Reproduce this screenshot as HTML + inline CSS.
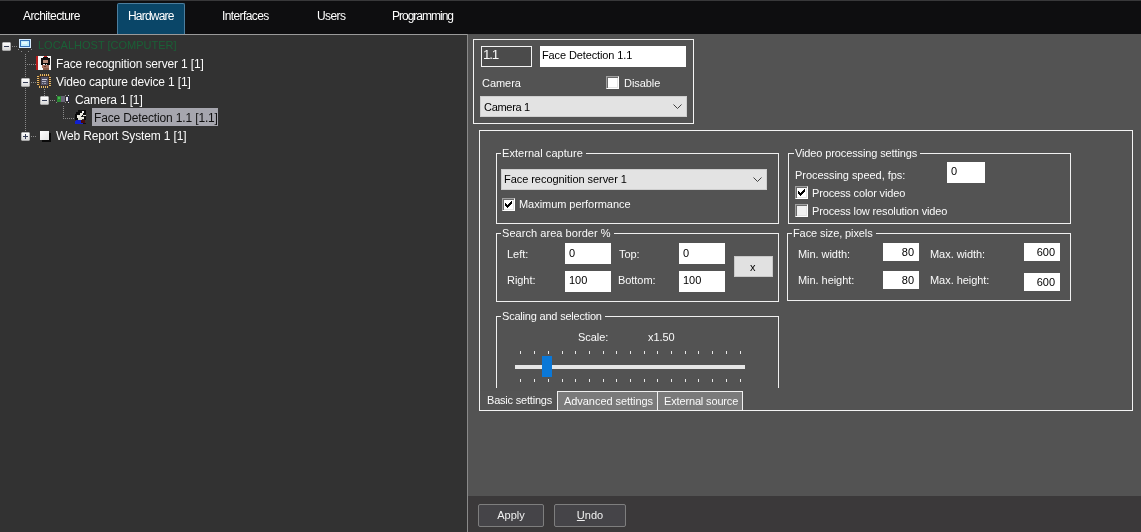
<!DOCTYPE html>
<html><head><meta charset="utf-8">
<style>
*{margin:0;padding:0;box-sizing:border-box}
html,body{width:1141px;height:532px;overflow:hidden;background:#323232;font-family:"Liberation Sans",sans-serif;position:relative}
.a{position:absolute}
.t{position:absolute;white-space:nowrap;line-height:1}
#top{left:0;top:0;width:1141px;height:34px;background:#0e0e10;border-top:1px solid #38383a}
.tab{position:absolute;will-change:transform;top:9px;font-size:12px;letter-spacing:-0.6px;color:#fff;white-space:nowrap;line-height:14px}
#hw{left:117px;top:3px;width:68px;height:31px;background:#0a4668;border:1px solid #4c7e9e;border-bottom:none;border-radius:2px 2px 0 0}
#treeline{left:0;top:34px;width:467px;height:1px;background:#9a9a9a}
#tree{left:0;top:35px;width:467px;height:497px;background:#323232}
#div{left:467px;top:34px;width:1px;height:498px;background:#8a8a8a}
#panel{left:468px;top:34px;width:673px;height:462px;background:#535353}
#bbar{left:468px;top:496px;width:673px;height:36px;background:#3b393a}
.tr{position:absolute;will-change:transform;font-size:12px;letter-spacing:-0.15px;color:#fafafa;white-space:nowrap;line-height:14px}
.exp{position:absolute;width:10px;height:10px;border:1px solid #8c8c8c;background:linear-gradient(#fafafa,#d4d4d4)}
.exp:before{content:"";position:absolute;left:1px;top:3px;width:6px;height:2px;background:#3e4a66}
.exp.plus:after{content:"";position:absolute;left:3px;top:1px;width:2px;height:6px;background:#3e4a66}
.dv{position:absolute;width:1px;background:repeating-linear-gradient(#8a8a8a 0 1px,transparent 1px 2px)}
.dh{position:absolute;height:1px;background:repeating-linear-gradient(90deg,#8a8a8a 0 1px,transparent 1px 2px)}
.u{position:absolute;will-change:transform;font-size:11px;letter-spacing:-0.05px;color:#fafafa;white-space:nowrap;line-height:13px}
.wl{position:absolute;border:1px solid #f4f4f4}
.inp{position:absolute;background:#fff}
.blk{color:#000}
.gb{position:absolute;border:1px solid #f0f0f0}
.gl{position:absolute;will-change:transform;background:#535353;padding:0 3px 0 1px;font-size:11px;letter-spacing:0.05px;color:#fafafa;line-height:13px;white-space:nowrap}
.cmb{position:absolute;background:#e3e3e3;border:1px solid #cfcfcf}
.cmb svg{position:absolute;right:4px;top:7px}
.cb{position:absolute;width:13px;height:13px;background:#fff;border:1px solid;border-color:#a0a0a0 #fff #fff #a0a0a0;box-shadow:inset 1px 1px 0 #696969,inset -1px -1px 0 #e3e3e3}
.tick{position:absolute;width:1px;height:3px;background:#e8e8e8}
.btn{position:absolute;will-change:transform;border:1px solid #7e7e7e;border-radius:2px;background:#454448;color:#f0f0f0;font-size:11px;line-height:21px;text-align:center}
</style></head><body>
<div id="top" class="a"></div>
<div class="tab" style="left:23px">Architecture</div>
<div id="hw" class="a"></div>
<div class="tab" style="left:128px;letter-spacing:-0.8px">Hardware</div>
<div class="tab" style="left:222px">Interfaces</div>
<div class="tab" style="left:317px">Users</div>
<div class="tab" style="left:392px;letter-spacing:-1px">Programming</div>

<div id="tree" class="a"></div>
<div id="treeline" class="a"></div>
<div id="div" class="a"></div>
<div id="panel" class="a"></div>
<div id="bbar" class="a"></div>

<!-- tree -->
<div class="dh" style="left:12px;top:46px;width:6px"></div>
<div class="dv" style="left:25px;top:54px;height:78px"></div>
<div class="dh" style="left:27px;top:64px;width:9px"></div>
<div class="dh" style="left:31px;top:82px;width:5px"></div>
<div class="dv" style="left:44px;top:89px;height:7px"></div>
<div class="dh" style="left:50px;top:100px;width:6px"></div>
<div class="dv" style="left:63px;top:106px;height:13px"></div>
<div class="dh" style="left:65px;top:118px;width:9px"></div>
<div class="dh" style="left:31px;top:136px;width:6px"></div>
<div class="a" style="left:18px;top:49px;width:1px;height:1px;background:#8c8c8c"></div><div class="a" style="left:31px;top:49px;width:1px;height:1px;background:#8c8c8c"></div><div class="a" style="left:21px;top:51px;width:1px;height:1px;background:#8c8c8c"></div><div class="a" style="left:28px;top:51px;width:1px;height:1px;background:#8c8c8c"></div>
<svg class="a" style="left:2px;top:42px" width="9" height="9" viewBox="0 0 9 9" shape-rendering="crispEdges"><defs><linearGradient id="eg" x1="0" y1="0" x2="0" y2="1"><stop offset="0" stop-color="#ffffff"/><stop offset="1" stop-color="#d8d8d8"/></linearGradient></defs><rect x="0" y="0" width="9" height="9" fill="#9a9a9a"/><rect x="1" y="1" width="7" height="7" fill="url(#eg)"/><rect x="1" y="0" width="7" height="1" fill="#b8b8b8"/><rect x="0" y="1" width="1" height="7" fill="#b8b8b8"/><rect x="8" y="1" width="1" height="7" fill="#b0b0b0"/><rect x="1" y="8" width="7" height="1" fill="#a8a8a8"/><rect x="0" y="0" width="1" height="1" fill="#6a6a6a"/><rect x="8" y="0" width="1" height="1" fill="#6a6a6a"/><rect x="0" y="8" width="1" height="1" fill="#6a6a6a"/><rect x="8" y="8" width="1" height="1" fill="#6a6a6a"/><rect x="2" y="4" width="5" height="1" fill="#353d55"/></svg>
<svg class="a" style="left:21px;top:78px" width="9" height="9" viewBox="0 0 9 9" shape-rendering="crispEdges"><defs><linearGradient id="eg" x1="0" y1="0" x2="0" y2="1"><stop offset="0" stop-color="#ffffff"/><stop offset="1" stop-color="#d8d8d8"/></linearGradient></defs><rect x="0" y="0" width="9" height="9" fill="#9a9a9a"/><rect x="1" y="1" width="7" height="7" fill="url(#eg)"/><rect x="1" y="0" width="7" height="1" fill="#b8b8b8"/><rect x="0" y="1" width="1" height="7" fill="#b8b8b8"/><rect x="8" y="1" width="1" height="7" fill="#b0b0b0"/><rect x="1" y="8" width="7" height="1" fill="#a8a8a8"/><rect x="0" y="0" width="1" height="1" fill="#6a6a6a"/><rect x="8" y="0" width="1" height="1" fill="#6a6a6a"/><rect x="0" y="8" width="1" height="1" fill="#6a6a6a"/><rect x="8" y="8" width="1" height="1" fill="#6a6a6a"/><rect x="2" y="4" width="5" height="1" fill="#353d55"/></svg>
<svg class="a" style="left:40px;top:96px" width="9" height="9" viewBox="0 0 9 9" shape-rendering="crispEdges"><defs><linearGradient id="eg" x1="0" y1="0" x2="0" y2="1"><stop offset="0" stop-color="#ffffff"/><stop offset="1" stop-color="#d8d8d8"/></linearGradient></defs><rect x="0" y="0" width="9" height="9" fill="#9a9a9a"/><rect x="1" y="1" width="7" height="7" fill="url(#eg)"/><rect x="1" y="0" width="7" height="1" fill="#b8b8b8"/><rect x="0" y="1" width="1" height="7" fill="#b8b8b8"/><rect x="8" y="1" width="1" height="7" fill="#b0b0b0"/><rect x="1" y="8" width="7" height="1" fill="#a8a8a8"/><rect x="0" y="0" width="1" height="1" fill="#6a6a6a"/><rect x="8" y="0" width="1" height="1" fill="#6a6a6a"/><rect x="0" y="8" width="1" height="1" fill="#6a6a6a"/><rect x="8" y="8" width="1" height="1" fill="#6a6a6a"/><rect x="2" y="4" width="5" height="1" fill="#353d55"/></svg>
<svg class="a" style="left:21px;top:132px" width="9" height="9" viewBox="0 0 9 9" shape-rendering="crispEdges"><defs><linearGradient id="eg" x1="0" y1="0" x2="0" y2="1"><stop offset="0" stop-color="#ffffff"/><stop offset="1" stop-color="#d8d8d8"/></linearGradient></defs><rect x="0" y="0" width="9" height="9" fill="#9a9a9a"/><rect x="1" y="1" width="7" height="7" fill="url(#eg)"/><rect x="1" y="0" width="7" height="1" fill="#b8b8b8"/><rect x="0" y="1" width="1" height="7" fill="#b8b8b8"/><rect x="8" y="1" width="1" height="7" fill="#b0b0b0"/><rect x="1" y="8" width="7" height="1" fill="#a8a8a8"/><rect x="0" y="0" width="1" height="1" fill="#6a6a6a"/><rect x="8" y="0" width="1" height="1" fill="#6a6a6a"/><rect x="0" y="8" width="1" height="1" fill="#6a6a6a"/><rect x="8" y="8" width="1" height="1" fill="#6a6a6a"/><rect x="2" y="4" width="5" height="1" fill="#353d55"/><rect x="4" y="2" width="1" height="5" fill="#353d55"/></svg>
<svg class="a" style="left:19px;top:39px" width="12" height="9" viewBox="0 0 12 9" shape-rendering="crispEdges"><rect x="0" y="0" width="12" height="9" fill="#d8ecff"/><rect x="1" y="1" width="10" height="7" fill="#3572b8"/><rect x="2" y="2" width="8" height="5" fill="#c4f0ff"/><rect x="3" y="3" width="5" height="2" fill="#e6faff"/></svg>
<div class="tr" style="left:38px;top:38px;color:#1a6036;font-size:11px;letter-spacing:0px">LOCALHOST [COMPUTER]</div>
<svg class="a" style="left:36px;top:56px" width="15" height="14" viewBox="0 0 15 14" shape-rendering="crispEdges"><rect x="0" y="0" width="15" height="14" fill="#fbfbfb"/><rect x="0" y="0" width="2" height="14" fill="#b81c1c"/><rect x="8" y="0" width="3" height="1" fill="#c82020"/><rect x="7" y="1" width="5" height="1" fill="#1a1010"/><rect x="5" y="2" width="9" height="2" fill="#140e0e"/><rect x="5" y="4" width="2" height="3" fill="#140e0e"/><rect x="12" y="4" width="2" height="5" fill="#140e0e"/><rect x="7" y="4" width="5" height="4" fill="#b88a78"/><rect x="5" y="7" width="8" height="2" fill="#0a0a0a"/><rect x="7" y="8" width="2" height="1" fill="#f0f0f0"/><rect x="10" y="8" width="1" height="1" fill="#d0d0d0"/><rect x="6" y="9" width="7" height="3" fill="#a87060"/><rect x="8" y="10" width="2" height="1" fill="#6a3a2a"/><rect x="7" y="12" width="6" height="2" fill="#8a5a48"/></svg>
<div class="tr" style="left:56px;top:57px">Face recognition server 1 [1]</div>
<svg class="a" style="left:36px;top:74px" width="16" height="15" viewBox="0 0 16 15" shape-rendering="crispEdges"><rect x="3" y="1" width="11" height="11" fill="#5a3a10"/><rect x="4" y="0" width="1" height="2" fill="#e6b868"/><rect x="3" y="12" width="1" height="2" fill="#e6b868"/><rect x="1" y="2" width="2" height="1" fill="#e6b868"/><rect x="13" y="3" width="2" height="1" fill="#e6b868"/><rect x="6" y="0" width="1" height="2" fill="#e6b868"/><rect x="5" y="12" width="1" height="2" fill="#e6b868"/><rect x="1" y="4" width="2" height="1" fill="#e6b868"/><rect x="13" y="5" width="2" height="1" fill="#e6b868"/><rect x="8" y="0" width="1" height="2" fill="#e6b868"/><rect x="7" y="12" width="1" height="2" fill="#e6b868"/><rect x="1" y="6" width="2" height="1" fill="#e6b868"/><rect x="13" y="7" width="2" height="1" fill="#e6b868"/><rect x="10" y="0" width="1" height="2" fill="#e6b868"/><rect x="9" y="12" width="1" height="2" fill="#e6b868"/><rect x="1" y="8" width="2" height="1" fill="#e6b868"/><rect x="13" y="9" width="2" height="1" fill="#e6b868"/><rect x="12" y="0" width="1" height="2" fill="#e6b868"/><rect x="11" y="12" width="1" height="2" fill="#e6b868"/><rect x="1" y="10" width="2" height="1" fill="#e6b868"/><rect x="13" y="11" width="2" height="1" fill="#e6b868"/><rect x="4" y="2" width="9" height="10" fill="#3a3030"/><rect x="5" y="3" width="7" height="8" fill="#505064"/><rect x="6" y="5" width="5" height="1" fill="#d0d0e0"/><rect x="6" y="7" width="4" height="1" fill="#b8b8c8"/><rect x="6" y="9" width="1" height="1" fill="#9a9aaa"/><rect x="8" y="9" width="2" height="1" fill="#9a9aaa"/></svg>
<div class="tr" style="left:56px;top:75px">Video capture device 1 [1]</div>
<svg class="a" style="left:56px;top:94px" width="14" height="10" viewBox="0 0 14 10" shape-rendering="crispEdges"><rect x="0" y="1" width="1" height="1" fill="#8a8a8a"/><rect x="0" y="8" width="1" height="1" fill="#8a8a8a"/><rect x="9" y="1" width="1" height="1" fill="#8a8a8a"/><rect x="9" y="8" width="1" height="1" fill="#8a8a8a"/><rect x="1" y="2" width="4" height="6" fill="#2a8a34"/><rect x="2" y="3" width="2" height="2" fill="#48b850"/><rect x="5" y="2" width="4" height="6" fill="#6a6478"/><rect x="10" y="3" width="2" height="4" fill="#e8e4f0"/><rect x="12" y="2" width="1" height="6" fill="#24244a"/><rect x="12" y="1" width="1" height="1" fill="#e0e0e0"/><rect x="12" y="8" width="1" height="1" fill="#e0e0e0"/></svg>
<div class="tr" style="left:75px;top:93px">Camera 1 [1]</div>
<svg class="a" style="left:75px;top:110px" width="12" height="14" viewBox="0 0 12 14" shape-rendering="crispEdges"><rect x="3" y="0" width="8" height="2" fill="#0a0a0a"/><rect x="1" y="2" width="10" height="3" fill="#0a0a0a"/><rect x="0" y="4" width="3" height="6" fill="#0a0a0a"/><rect x="9" y="4" width="2" height="6" fill="#0a0a0a"/><rect x="7" y="1" width="2" height="2" fill="#f0f0f0"/><rect x="5" y="3" width="3" height="2" fill="#e8e8e0"/><rect x="2" y="5" width="5" height="3" fill="#e8e8e0"/><rect x="3" y="8" width="4" height="2" fill="#dcdcd0"/><rect x="7" y="5" width="1" height="2" fill="#0a0a0a"/><rect x="8" y="5" width="3" height="1" fill="#e0e0d8"/><rect x="7" y="7" width="2" height="2" fill="#e8e8e0"/><rect x="6" y="6" width="1" height="1" fill="#222"/><rect x="1" y="10" width="6" height="1" fill="#1020c0"/><rect x="0" y="11" width="8" height="3" fill="#1020d0"/><rect x="6" y="10" width="4" height="3" fill="#4a0c0c"/><rect x="8" y="13" width="3" height="1" fill="#111"/></svg>
<div class="a" style="left:92px;top:108px;width:126px;height:18px;background:#a6a6ae"></div>
<div class="tr" style="left:94px;top:111px;color:#111">Face Detection 1.1 [1.1]</div>
<div class="a" style="left:42px;top:133px;width:9px;height:9px;background:#0a0a0a"></div>
<div class="a" style="left:40px;top:131px;width:9px;height:9px;background:linear-gradient(135deg,#ffffff,#e4e4e4)"></div>
<div class="tr" style="left:56px;top:129px">Web Report System 1 [1]</div>

<!-- top group -->
<div class="wl" style="left:473px;top:39px;width:221px;height:85px"></div>
<div class="wl" style="left:481px;top:46px;width:51px;height:21px;background:#4b4b4b"></div>
<div class="u" style="left:483px;top:48px;font-size:13.4px;letter-spacing:-1.2px">1.1</div>
<div class="inp" style="left:540px;top:46px;width:146px;height:21px"></div>
<div class="u blk" style="left:542px;top:49px;letter-spacing:-0.12px">Face Detection 1.1</div>
<div class="u" style="left:482px;top:77px">Camera</div>
<div class="cb" style="left:606px;top:76px"></div>
<div class="u" style="left:624px;top:77px">Disable</div>
<div class="cmb" style="left:480px;top:96px;width:207px;height:21px"><svg width="9" height="6" viewBox="0 0 9 6"><polyline points="0.5,0.5 4.5,4.5 8.5,0.5" fill="none" stroke="#404040" stroke-width="1"/></svg></div>
<div class="u blk" style="left:484px;top:101px;letter-spacing:-0.3px">Camera 1</div>

<!-- tab panel -->
<div class="wl" style="left:479px;top:130px;width:654px;height:281px"></div>

<!-- External capture -->
<div class="gb" style="left:496px;top:153px;width:283px;height:71px"></div>
<div class="gl" style="left:501px;top:147px">External capture</div>
<div class="cmb" style="left:501px;top:169px;width:266px;height:21px"><svg width="9" height="6" viewBox="0 0 9 6"><polyline points="0.5,0.5 4.5,4.5 8.5,0.5" fill="none" stroke="#404040" stroke-width="1"/></svg></div>
<div class="u blk" style="left:504px;top:173px">Face recognition server 1</div>
<div class="cb" style="left:502px;top:198px"><svg class="a" style="left:2px;top:2px" width="7" height="7" viewBox="0 0 7 7" shape-rendering="crispEdges" fill="#000"><rect x="6" y="0" width="1" height="1"/><rect x="5" y="1" width="1" height="1"/><rect x="6" y="1" width="1" height="1"/><rect x="0" y="2" width="1" height="1"/><rect x="4" y="2" width="1" height="1"/><rect x="5" y="2" width="1" height="1"/><rect x="6" y="2" width="1" height="1"/><rect x="0" y="3" width="1" height="1"/><rect x="1" y="3" width="1" height="1"/><rect x="3" y="3" width="1" height="1"/><rect x="4" y="3" width="1" height="1"/><rect x="5" y="3" width="1" height="1"/><rect x="0" y="4" width="1" height="1"/><rect x="1" y="4" width="1" height="1"/><rect x="2" y="4" width="1" height="1"/><rect x="3" y="4" width="1" height="1"/><rect x="4" y="4" width="1" height="1"/><rect x="1" y="5" width="1" height="1"/><rect x="2" y="5" width="1" height="1"/><rect x="3" y="5" width="1" height="1"/><rect x="2" y="6" width="1" height="1"/></svg></div>
<div class="u" style="left:519px;top:198px">Maximum performance</div>

<!-- Video processing settings -->
<div class="gb" style="left:788px;top:153px;width:283px;height:71px"></div>
<div class="gl" style="left:794px;top:147px;letter-spacing:-0.12px">Video processing settings</div>
<div class="u" style="left:795px;top:169px">Processing speed, fps:</div>
<div class="inp" style="left:947px;top:162px;width:38px;height:21px"></div>
<div class="u blk" style="left:951px;top:165px">0</div>
<div class="cb" style="left:795px;top:186px"><svg class="a" style="left:2px;top:2px" width="7" height="7" viewBox="0 0 7 7" shape-rendering="crispEdges" fill="#000"><rect x="6" y="0" width="1" height="1"/><rect x="5" y="1" width="1" height="1"/><rect x="6" y="1" width="1" height="1"/><rect x="0" y="2" width="1" height="1"/><rect x="4" y="2" width="1" height="1"/><rect x="5" y="2" width="1" height="1"/><rect x="6" y="2" width="1" height="1"/><rect x="0" y="3" width="1" height="1"/><rect x="1" y="3" width="1" height="1"/><rect x="3" y="3" width="1" height="1"/><rect x="4" y="3" width="1" height="1"/><rect x="5" y="3" width="1" height="1"/><rect x="0" y="4" width="1" height="1"/><rect x="1" y="4" width="1" height="1"/><rect x="2" y="4" width="1" height="1"/><rect x="3" y="4" width="1" height="1"/><rect x="4" y="4" width="1" height="1"/><rect x="1" y="5" width="1" height="1"/><rect x="2" y="5" width="1" height="1"/><rect x="3" y="5" width="1" height="1"/><rect x="2" y="6" width="1" height="1"/></svg></div>
<div class="u" style="left:812px;top:187px;letter-spacing:-0.15px">Process color video</div>
<div class="cb" style="left:795px;top:204px;background:#f0f0f0"></div>
<div class="u" style="left:812px;top:205px;letter-spacing:-0.15px">Process low resolution video</div>

<!-- Search area border -->
<div class="gb" style="left:496px;top:233px;width:283px;height:69px"></div>
<div class="gl" style="left:501px;top:227px">Search area border %</div>
<div class="u" style="left:507px;top:248px">Left:</div>
<div class="inp" style="left:565px;top:243px;width:46px;height:21px"></div>
<div class="u blk" style="left:569px;top:247px">0</div>
<div class="u" style="left:619px;top:248px">Top:</div>
<div class="inp" style="left:679px;top:243px;width:46px;height:21px"></div>
<div class="u blk" style="left:683px;top:247px">0</div>
<div class="u" style="left:507px;top:274px">Right:</div>
<div class="inp" style="left:565px;top:271px;width:46px;height:21px"></div>
<div class="u blk" style="left:569px;top:274px">100</div>
<div class="u" style="left:618px;top:274px">Bottom:</div>
<div class="inp" style="left:679px;top:271px;width:46px;height:21px"></div>
<div class="u blk" style="left:683px;top:274px">100</div>
<div class="a" style="left:734px;top:256px;width:39px;height:21px;background:#e1e1e1;border:1px solid #c8c8c8"></div>
<div class="u blk" style="left:750px;top:261px">x</div>

<!-- Face size -->
<div class="gb" style="left:787px;top:233px;width:284px;height:68px"></div>
<div class="gl" style="left:792px;top:227px;letter-spacing:-0.1px">Face size, pixels</div>
<div class="u" style="left:798px;top:248px">Min. width:</div>
<div class="inp" style="left:883px;top:243px;width:36px;height:18px"></div>
<div class="u blk" style="left:883px;top:246px;width:31px;text-align:right">80</div>
<div class="u" style="left:930px;top:248px">Max. width:</div>
<div class="inp" style="left:1024px;top:243px;width:36px;height:18px"></div>
<div class="u blk" style="left:1024px;top:246px;width:31px;text-align:right">600</div>
<div class="u" style="left:798px;top:274px">Min. height:</div>
<div class="inp" style="left:883px;top:271px;width:36px;height:18px"></div>
<div class="u blk" style="left:883px;top:274px;width:31px;text-align:right">80</div>
<div class="u" style="left:930px;top:274px">Max. height:</div>
<div class="inp" style="left:1024px;top:273px;width:36px;height:18px"></div>
<div class="u blk" style="left:1024px;top:276px;width:31px;text-align:right">600</div>

<!-- Scaling -->
<div class="a" style="left:496px;top:316px;width:283px;height:72px;border:1px solid #f0f0f0;border-bottom:none"></div>
<div class="gl" style="left:501px;top:310px;letter-spacing:-0.2px">Scaling and selection</div>
<div class="u" style="left:578px;top:331px">Scale:</div>
<div class="u" style="left:648px;top:331px">x1.50</div>
<div class="tick" style="left:520px;top:351px"></div><div class="tick" style="left:520px;top:379px"></div><div class="tick" style="left:534px;top:351px"></div><div class="tick" style="left:534px;top:379px"></div><div class="tick" style="left:548px;top:351px"></div><div class="tick" style="left:548px;top:379px"></div><div class="tick" style="left:562px;top:351px"></div><div class="tick" style="left:562px;top:379px"></div><div class="tick" style="left:575px;top:351px"></div><div class="tick" style="left:575px;top:379px"></div><div class="tick" style="left:589px;top:351px"></div><div class="tick" style="left:589px;top:379px"></div><div class="tick" style="left:603px;top:351px"></div><div class="tick" style="left:603px;top:379px"></div><div class="tick" style="left:616px;top:351px"></div><div class="tick" style="left:616px;top:379px"></div><div class="tick" style="left:630px;top:351px"></div><div class="tick" style="left:630px;top:379px"></div><div class="tick" style="left:644px;top:351px"></div><div class="tick" style="left:644px;top:379px"></div><div class="tick" style="left:657px;top:351px"></div><div class="tick" style="left:657px;top:379px"></div><div class="tick" style="left:671px;top:351px"></div><div class="tick" style="left:671px;top:379px"></div><div class="tick" style="left:685px;top:351px"></div><div class="tick" style="left:685px;top:379px"></div><div class="tick" style="left:698px;top:351px"></div><div class="tick" style="left:698px;top:379px"></div><div class="tick" style="left:712px;top:351px"></div><div class="tick" style="left:712px;top:379px"></div><div class="tick" style="left:726px;top:351px"></div><div class="tick" style="left:726px;top:379px"></div><div class="tick" style="left:740px;top:351px"></div><div class="tick" style="left:740px;top:379px"></div>
<div class="a" style="left:515px;top:365px;width:230px;height:4px;background:#e6e6e6"></div>
<div class="a" style="left:542px;top:356px;width:10px;height:21px;background:#0a78d8"></div>

<!-- bottom tabs -->
<div class="a" style="left:480px;top:391px;width:77px;height:19px;background:#545454"></div>
<div class="u" style="left:487px;top:394px;letter-spacing:-0.2px">Basic settings</div>
<div class="a" style="left:557px;top:391px;width:186px;height:19px;background:#7a7a7a;border:1px solid #f0f0f0;border-bottom:none"></div>
<div class="a" style="left:657px;top:391px;width:1px;height:19px;background:#f0f0f0"></div>
<div class="u" style="left:564px;top:395px">Advanced settings</div>
<div class="u" style="left:664px;top:395px;letter-spacing:-0.15px">External source</div>

<!-- buttons -->
<div class="btn" style="left:478px;top:504px;width:66px;height:23px">Apply</div>
<div class="btn" style="left:554px;top:504px;width:72px;height:23px"><u>U</u>ndo</div>
</body></html>
